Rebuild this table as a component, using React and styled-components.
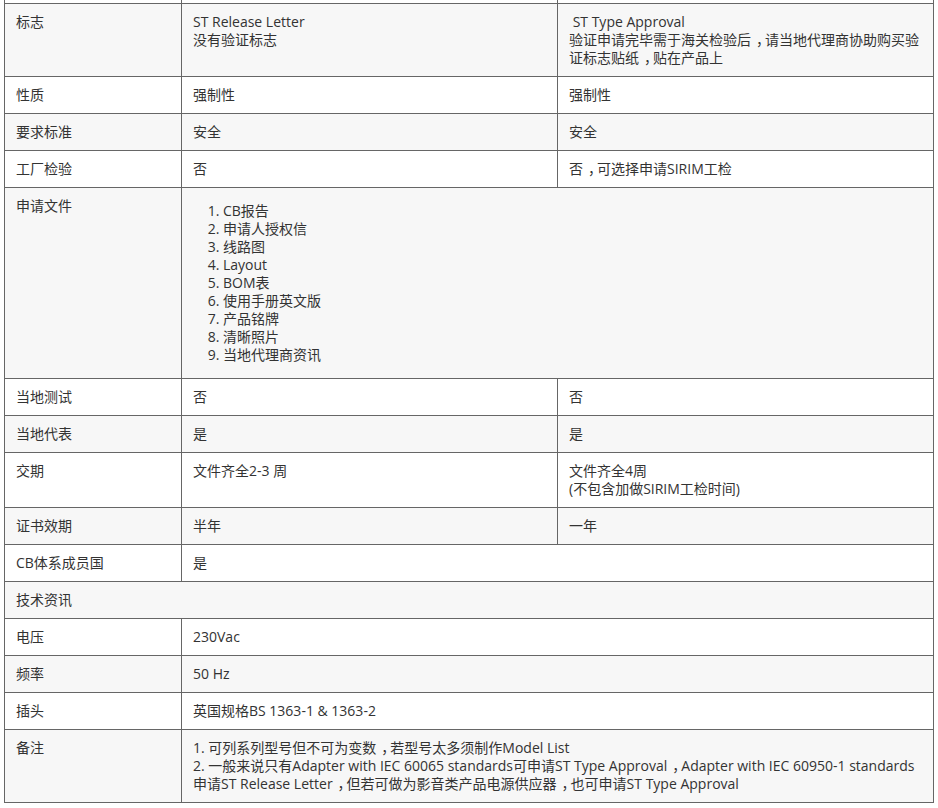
import React from "react"
import styled, { createGlobalStyle } from "styled-components"

const GlobalStyle = createGlobalStyle`
  html, body {
    margin: 0;
    padding: 0;
    background: #fff;
  }
  body {
    font-family: "Open Sans", "Noto Sans CJK SC", sans-serif;
    font-size: 14px;
    line-height: 18px;
    color: #333;
    overflow: hidden;
  }
`

const Sheet = styled.div`
  /* first row belongs to the part of the table above the visible area */
  margin: -34px 4px 0;
  display: grid;
  grid-template-columns: 177px 376px 376px;
  width: max-content;
  border-left: 1px solid #666;
  border-top: 1px solid #666;
`
const Cell = styled.div`
  grid-column: span ${p => p.$span || 1};
  min-height: 18px;
  padding: 9px 11px;
  border-right: 1px solid #666;
  border-bottom: 1px solid #666;
  background-color: ${p => (p.$shade ? "#f7f7f7" : "#fff")};
  word-break: break-all;
`
const Line = styled.div`
  white-space: pre-wrap;
`
// full-width comma sits centred in its square in the reference
const Comma = styled.span`
  padding-left: 5px;
  margin-right: -5px;
`
const DocList = styled.ol`
  margin: 5px 0;
  padding-left: 30px;
  list-style: decimal;
`

const withCommas = text =>
  text.split("，").flatMap((part, i) => (i === 0 ? [part] : [<Comma key={i}>，</Comma>, part]))

const docs = [
  "CB报告",
  "申请人授权信",
  "线路图",
  "Layout",
  "BOM表",
  "使用手册英文版",
  "产品铭牌",
  "清晰照片",
  "当地代理商资讯",
]

const rows = [
  { label: "", cells: [[], []] },
  {
    label: "标志",
    cells: [
      ["ST Release Letter", "没有验证标志"],
      ["\u00a0ST Type Approval", "验证申请完毕需于海关检验后，请当地代理商协助购买验证标志贴纸，贴在产品上"],
    ],
  },
  { label: "性质", cells: [["强制性"], ["强制性"]] },
  { label: "要求标准", cells: [["安全"], ["安全"]] },
  { label: "工厂检验", cells: [["否"], ["否，可选择申请SIRIM工检"]] },
  { label: "申请文件", list: docs },
  { label: "当地测试", cells: [["否"], ["否"]] },
  { label: "当地代表", cells: [["是"], ["是"]] },
  { label: "交期", cells: [["文件齐全2-3 周"], ["文件齐全4周", "(不包含加做SIRIM工检时间)"]] },
  { label: "证书效期", cells: [["半年"], ["一年"]] },
  { label: "CB体系成员国", cells: [["是"]] },
  { label: "技术资讯", cells: [] },
  { label: "电压", cells: [["230Vac"]] },
  { label: "频率", cells: [["50 Hz"]] },
  { label: "插头", cells: [["英国规格BS 1363-1 & 1363-2"]] },
  {
    label: "备注",
    cells: [
      [
        "1. 可列系列型号但不可为变数，若型号太多须制作Model List",
        "2. 一般来说只有Adapter with IEC 60065 standards可申请ST Type Approval，Adapter with IEC 60950-1 standards 申请ST Release Letter，但若可做为影音类产品电源供应器，也可申请ST Type Approval",
      ],
    ],
  },
]

const App = () => {
  return (
    <>
      <GlobalStyle />
      <Sheet>
        {rows.map((row, i) => {
          const shade = i % 2 === 1
          if (row.list) {
            return (
              <React.Fragment key={i}>
                <Cell $shade={shade}>{row.label}</Cell>
                <Cell $shade={shade} $span={2}>
                  <DocList>
                    {row.list.map(d => (
                      <li key={d}>{d}</li>
                    ))}
                  </DocList>
                </Cell>
              </React.Fragment>
            )
          }
          return (
            <React.Fragment key={i}>
              <Cell $shade={shade} $span={row.cells.length ? 1 : 3}>
                {row.label}
              </Cell>
              {row.cells.map((lines, j) => (
                <Cell key={j} $shade={shade} $span={row.cells.length === 1 ? 2 : 1}>
                  {lines.map(l => (
                    <Line key={l}>{withCommas(l)}</Line>
                  ))}
                </Cell>
              ))}
            </React.Fragment>
          )
        })}
      </Sheet>
    </>
  )
}

export default App
